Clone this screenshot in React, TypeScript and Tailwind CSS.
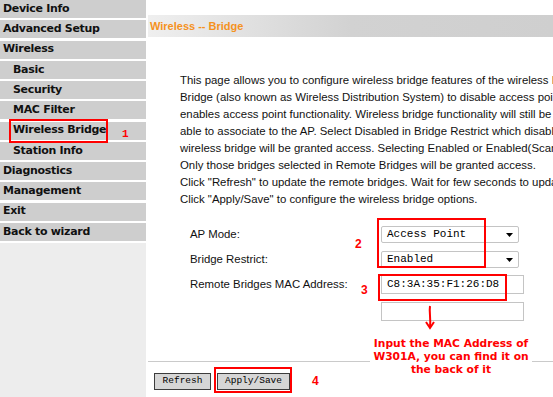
import React from 'react';

const menu = [
  { label: 'Device Info', sub: false },
  { label: 'Advanced Setup', sub: false },
  { label: 'Wireless', sub: false },
  { label: 'Basic', sub: true },
  { label: 'Security', sub: true },
  { label: 'MAC Filter', sub: true },
  { label: 'Wireless Bridge', sub: true },
  { label: 'Station Info', sub: true },
  { label: 'Diagnostics', sub: false },
  { label: 'Management', sub: false },
  { label: 'Exit', sub: false },
  { label: 'Back to wizard', sub: false },
];

const intro = [
  'This page allows you to configure wireless bridge features of the wireless LAN interface. You can select Wireless',
  'Bridge (also known as Wireless Distribution System) to disable access point functionality. Selecting Access Point',
  'enables access point functionality. Wireless bridge functionality will still be available and wireless stations will be',
  'able to associate to the AP. Select Disabled in Bridge Restrict which disables wireless bridge restriction. Any',
  'wireless bridge will be granted access. Selecting Enabled or Enabled(Scan) enables wireless bridge restriction.',
  'Only those bridges selected in Remote Bridges will be granted access.',
  'Click "Refresh" to update the remote bridges. Wait for few seconds to update.',
  'Click "Apply/Save" to configure the wireless bridge options.',
];

function FakeSelect({ value }: { value: string }) {
  return (
    <div className="relative w-[138px] h-[17px] bg-white border border-[#c4c4c4] rounded-[2px] flex items-center pl-[5px] font-['Liberation_Mono',monospace] text-[11px] text-black">
      {value}
      {/* dropdown arrow */}
      <svg className="absolute right-[5px] top-[6px]" width="7" height="4" viewBox="0 0 7 4">
        <path d="M0 0 L7 0 L3.5 4 Z" fill="#000" />
      </svg>
    </div>
  );
}

function Annot({ n, className }: { n: string; className: string }) {
  return (
    <span className={`absolute font-['Liberation_Sans',sans-serif] font-bold text-[12px] leading-none text-[#ff0000] ${className}`}>
      {n}
    </span>
  );
}

export default function App() {
  return (
    <div className="relative w-[553px] h-[397px] overflow-hidden bg-white flex">
      {/* left menu */}
      <div className="w-[146px] shrink-0 h-full flex flex-col">
        <div className="flex flex-col gap-[2.25px] bg-white">
          {menu.map((m) => (
            <div
              key={m.label}
              className={`h-[18px] bg-[#cecece] flex items-center font-['DejaVu_Sans',sans-serif] font-bold text-[11px] tracking-[-0.3px] text-[#111] whitespace-nowrap ${
                m.sub ? 'pl-[13px]' : 'pl-[3px]'
              }`}
            >
              {m.label}
            </div>
          ))}
        </div>
        <div className="flex-1 mt-[2px] bg-[#ededed]" />
      </div>

      {/* main area */}
      <div className="flex-1 ml-[2px] flex flex-col min-w-0">
        <div className="mt-[15px] h-[22px] bg-linear-to-r from-[#efefef] via-[#d2d2d2] to-[#cfcfcf] flex items-center pl-[2px]">
          <span className="font-['Liberation_Sans',sans-serif] font-bold text-[11px] text-[#f5921e]">Wireless -- Bridge</span>
        </div>

        <div className="mt-[34.5px] pl-[32px] font-['Liberation_Sans',sans-serif] text-[11.4px] leading-[17px] text-[#111]">
          {intro.map((line) => (
            <div key={line} className="whitespace-nowrap">
              {line}
            </div>
          ))}
        </div>

        <div className="mt-[18.5px] pl-[42px] flex flex-col font-['Liberation_Sans',sans-serif] text-[11.4px] text-[#111]">
          <div className="flex items-center h-[17px]">
            <span className="w-[191px]">AP Mode:</span>
            <FakeSelect value="Access Point" />
          </div>
          <div className="flex items-center h-[17px] mt-[8px]">
            <span className="w-[191px]">Bridge Restrict:</span>
            <FakeSelect value="Enabled" />
          </div>
          <div className="flex items-center h-[19px] mt-[7px]">
            <span className="w-[191px]">Remote Bridges MAC Address:</span>
            <div className="w-[143px] h-[19px] border border-[#c4c4c4] bg-white flex items-center pl-[5px] font-['Liberation_Mono',monospace] text-[11px] text-black">
              C8:3A:35:F1:26:D8
            </div>
          </div>
          <div className="flex items-center h-[19px] mt-[8px]">
            <span className="w-[191px]" />
            <div className="w-[143px] h-[19px] border border-[#c4c4c4] bg-white" />
          </div>
        </div>

        <div className="mt-[40px] border-t border-[#cacaca]" />

        <div className="mt-[11px] pl-[6px] flex gap-[6px] font-['Liberation_Mono',monospace] text-[9.5px] text-black">
          <button className="w-[57px] h-[17px] bg-[#d6d6d6] border border-[#3c3c3c] flex items-center justify-center">
            Refresh
          </button>
          <button className="w-[73px] h-[17px] bg-[#d6d6d6] border border-[#3c3c3c] flex items-center justify-center">
            Apply/Save
          </button>
        </div>
      </div>

      {/* red annotations laid over the screenshot */}
      <div className="absolute left-[9px] top-[119px] w-[99px] h-[24px] border-2 border-[#ff0000]" />
      <span className="absolute left-[122px] top-[129px] font-['Liberation_Mono',monospace] font-bold text-[11px] leading-none text-[#ff0000]">1</span>

      <div className="absolute left-[377px] top-[218px] w-[109px] h-[50px] border-2 border-[#ff0000]" />
      <Annot n="2" className="left-[355px] top-[238px]" />

      <div className="absolute left-[378px] top-[274px] w-[129px] h-[27px] border-2 border-[#ff0000]" />
      <Annot n="3" className="left-[361px] top-[284px]" />

      <div className="absolute left-[214px] top-[367px] w-[78px] h-[26px] border-2 border-[#ff0000]" />
      <Annot n="4" className="left-[312px] top-[375px]" />

      <svg className="absolute left-[424px] top-[305px]" width="12" height="25" viewBox="0 0 12 25">
        <path d="M6 1 C5 7 7 13 6 22" stroke="#ff0000" strokeWidth="2" fill="none" />
        <path d="M2 17 L6 23 L10 17" stroke="#ff0000" strokeWidth="2" fill="none" />
      </svg>

      <div className="absolute left-[370px] top-[337px] w-[162px] bg-white text-center font-['DejaVu_Sans',sans-serif] font-bold text-[10.7px] leading-[13px] text-[#ff0000]">
        Input the MAC Address of
        <br />
        W301A, you can find it on
        <br />
        the back of it
      </div>
    </div>
  );
}
